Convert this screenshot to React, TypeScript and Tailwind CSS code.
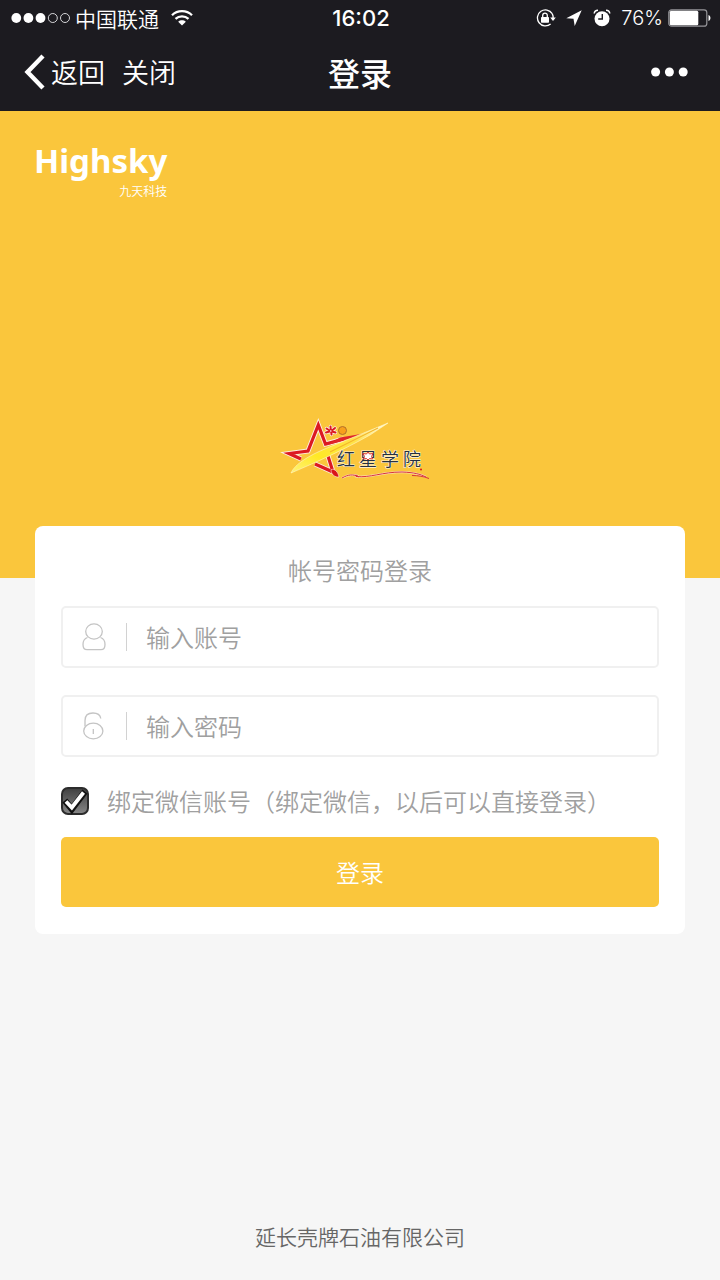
import { useState } from "react";

function StatusBar() {
  return (
    <div className="grid h-9 grid-cols-[1fr_auto_1fr] items-center pl-[11px] pr-[9px]">
      <div className="flex items-center">
        <svg className="h-3 w-[60px]" viewBox="0 0 60 12" aria-hidden="true">
          <g fill="#fff">
            <circle cx="5.3" cy="6" r="4.9" />
            <circle cx="17.4" cy="6" r="4.9" />
            <circle cx="29.5" cy="6" r="4.9" />
          </g>
          <g fill="none" stroke="#d5d5d8" strokeWidth="1">
            <circle cx="41.8" cy="6" r="4.5" />
            <circle cx="54" cy="6" r="4.5" />
          </g>
        </svg>
        <span className="ml-1 text-[21px] leading-8">中国联通</span>
        <svg className="ml-3 h-4 w-[22px]" viewBox="0 0 22 16" aria-hidden="true">
          <g fill="none" stroke="#fff" strokeWidth="2.3">
            <path d="M1 5.2C6.5-.2 15.5-.2 21 5.2" />
            <path d="M4.5 8.9c3.6-3.4 9.4-3.4 13 0" />
          </g>
          <path d="M7.2 11.7c2.2-1.9 5.4-1.9 7.6 0L11 15.6z" fill="#fff" />
        </svg>
      </div>
      <span className="font-['Inter','Noto_Sans_CJK_SC',sans-serif] text-[22px] font-medium leading-8">16:02</span>
      <div className="flex items-center justify-end">
        <svg className="h-[18px] w-5" viewBox="0 0 20 18" aria-hidden="true">
          <path d="M16.2 4.6A8 8 0 1 0 14.6 15" fill="none" stroke="#fff" strokeWidth="1.3" />
          <path d="M16.2 4.6c.8 1.400 1.100 3 .9 5" fill="none" stroke="#fff" strokeWidth="1.3" />
          <path d="M14.2 8.4h5.6L17 12z" fill="#fff" />
          <rect x="5" y="8" width="8" height="5.8" rx=".7" fill="#fff" />
          <path d="M6.7 8.2V6.4a2.3 2.3 0 0 1 4.6 0v1.8" fill="none" stroke="#fff" strokeWidth="1.3" />
        </svg>
        <svg className="ml-2.5 h-4 w-4" viewBox="0 0 16 16" aria-hidden="true">
          <path d="M15.7.2.3 8.200l7.200.5 1.200 7.200z" fill="#fff" />
        </svg>
        <svg className="ml-[11px] h-[18px] w-[18px]" viewBox="0 0 18 18" aria-hidden="true">
          <circle cx="9" cy="9.700" r="7.500" fill="#fff" />
          <path d="M1.200 4.500C1.400 2.500 2.900 1.200 5 1.200M16.800 4.500c-.2-2-1.700-3.300-3.800-3.300" fill="none" stroke="#fff" strokeWidth="1.500" />
          <path d="M9.300 5v5H5.200" fill="none" stroke="#1c1b20" strokeWidth="1.400" />
        </svg>
        <span className="ml-2.5 font-['Inter','Noto_Sans_CJK_SC',sans-serif] text-xl leading-8 font-[350]">76%</span>
        <svg className="ml-[5px] h-[18px] w-[43px]" viewBox="0 0 43 18" aria-hidden="true">
          <rect x=".8" y=".8" width="38" height="16.400" rx="2.800" fill="none" stroke="#96969a" strokeWidth="1.200" />
          <rect x="1.800" y="1.800" width="28.500" height="14.400" rx="1.500" fill="#fff" />
          <path d="M40.500 6c2.600.8 2.600 5.200 0 6z" fill="#fff" />
        </svg>
      </div>
    </div>
  );
}

function NavBar() {
  return (
    <nav className="grid h-[75px] grid-cols-[1fr_auto_1fr] items-center px-6 pb-1">
      <div className="flex items-center text-[27px] leading-9">
        <button type="button" className="flex items-center gap-1.5">
          <svg className="h-9 w-[21px]" viewBox="0 0 21 36" aria-hidden="true">
            <path d="M19 2 3.500 18 19 34" fill="none" stroke="#fff" strokeWidth="4.400" />
          </svg>
          返回
        </button>
        <button type="button" className="ml-[17px]">关闭</button>
      </div>
      <h1 className="text-[32px] font-medium leading-10">登录</h1>
      <button type="button" aria-label="更多" className="mr-2 justify-self-end">
        <svg className="h-2.5 w-[37px]" viewBox="0 0 37 10" fill="#fff" aria-hidden="true">
          <circle cx="4.600" cy="5" r="4.500" />
          <circle cx="18.400" cy="5" r="4.500" />
          <circle cx="32.200" cy="5" r="4.500" />
        </svg>
      </button>
    </nav>
  );
}

function AcademyLogo() {
  return (
    <svg className="h-20 w-40" viewBox="0 0 160 80" role="img" aria-label="红星学院">
      <defs>
        <linearGradient id="beam" x1="0" y1="1" x2="1" y2="0">
          <stop offset="0" stopColor="#fff27a" />
          <stop offset=".3" stopColor="#ffe926" />
          <stop offset=".65" stopColor="#ffe14a" />
          <stop offset="1" stopColor="#fffbe8" />
        </linearGradient>
      </defs>
      {/* star outline: white edge below, red on top */}
      <g fill="none" strokeLinejoin="miter">
        <path d="M21 49 9 43.500 28 41 38.300 15 45.500 34 64 29" stroke="#fdeee0" strokeWidth="5" />
        <path d="M35 54 53 62 48 46" stroke="#fdeee0" strokeWidth="5" />
        <path d="M21 49 9 43.500 28 41 38.300 15 45.500 34 64 29" stroke="#dc1a22" strokeWidth="3.200" />
        <path d="M35 54 53 62 48 46" stroke="#dc1a22" strokeWidth="3.200" />
      </g>
      <path d="M46 35.500 90 22.500 60 27.500z" fill="#e0262a" />
      <path d="M51 59.500c4-1 7 2.500 8 7.500-4 .5-8-2.500-8-7.500Z" fill="#d9151a" stroke="#fdeee0" strokeWidth=".6" />
      {/* beam across the star */}
      <path d="M11 63C15 54 29 45 52 36L108 13 90 25C63 40 39 51 11 63Z" fill="url(#beam)" stroke="#fff8c8" strokeWidth=".6" />
      <path d="M50 42 98 18" fill="none" stroke="#f4b62a" strokeWidth="1.200" />
      {/* flower and sun */}
      <path
        d="M46.500 18.500 49.500 20.500M50.500 16.500l.3 3.500M55 18l-3 2.500M46 22.500l3.500-1M51.500 24.500l-.3-3M55.500 22.500l-3.500-1"
        stroke="#fdeee0"
        strokeWidth="3.400"
        strokeLinecap="round"
      />
      <path
        d="M46.500 18.500 49.500 20.500M50.500 16.500l.3 3.500M55 18l-3 2.500M46 22.500l3.500-1M51.500 24.500l-.3-3M55.500 22.500l-3.500-1"
        stroke="#dc1a22"
        strokeWidth="2"
        strokeLinecap="round"
      />
      <circle cx="50.800" cy="21" r=".8" fill="#fff" />
      <circle cx="62.500" cy="20.500" r="4" fill="#f8a01c" stroke="#b0702c" strokeWidth="1" />
      {/* red sweep under the name */}
      <path
        d="M62 68C68 64.500 73 64 78 66.500c3 1.500-5-4-2 0 14 1.500 26-4.500 46-4.500 12 .5 18 2 24 5"
        fill="none"
        stroke="#fbe3c0"
        strokeWidth="2"
      />
      <path
        d="M62 68C68 64.500 73 64 78 66.500c3 1.500-5-4-2 0 14 1.500 26-4.500 46-4.500 12 .5 18 2 24 5M132 65.500c6 0 12 1 17 3"
        fill="none"
        stroke="#d8343a"
        strokeWidth="1"
      />
      <text
        x="57 79 101 123"
        y="56"
        fill="#24303f"
        stroke="#fdf3dc"
        strokeWidth="1.200"
        paintOrder="stroke"
        className="font-['Noto_Sans_CJK_SC',sans-serif] text-[18px]"
      >
        红星学院
      </text>
      <path d="M83 43.500l3.500.5 1.500-2 1.500 2 3.500-.5-1.500 3 1 2.500-3-.5-1.500 1.500-1.500-1.500-3 .5 1-2.500z" fill="#fff" stroke="#d8343a" strokeWidth="1" />
      <circle cx="141" cy="59.500" r="1" fill="#d9151a" />
    </svg>
  );
}

function UserIcon() {
  return (
    <svg className="h-7 w-6" viewBox="0 0 24 28" fill="none" stroke="#c4c4c4" strokeWidth="1.300" aria-hidden="true">
      <ellipse cx="12" cy="8.500" rx="8.300" ry="7.600" />
      <path d="M5.500 14.500C2.500 15.500 1 18 1 21.500 1 25 2.300 26.700 5 26.700h14c2.700 0 4-1.700 4-5.200 0-3.500-1.500-6-4.500-7" />
    </svg>
  );
}

function LockIcon() {
  return (
    <svg className="h-7 w-6" viewBox="0 0 24 28" fill="none" stroke="#c4c4c4" strokeWidth="1.300" aria-hidden="true">
      <ellipse cx="11.300" cy="19" rx="9.600" ry="7.900" />
      <path d="M3 14.500V8.500C3 3.500 6 1 11 1c4.500 0 7.300 2 7.800 5.500M11.300 17v5" />
    </svg>
  );
}

const fields = [
  { name: "account", type: "text", placeholder: "输入账号", Icon: UserIcon },
  { name: "password", type: "password", placeholder: "输入密码", Icon: LockIcon },
];

export default function App() {
  const [bind, setBind] = useState(true);

  return (
    <div className="flex min-h-screen flex-col bg-[#f6f6f6] font-['Noto_Sans_CJK_SC',sans-serif] font-[350]">
      <header className="bg-[#1c1b20] text-white">
        <StatusBar />
        <NavBar />
      </header>

      <section className="flex flex-col justify-between bg-[#fac63c] pb-[88px] pt-8">
        <div className="ml-[34px] w-fit text-right text-white">
          <div className="font-['Noto_Sans',sans-serif] text-[33px] font-bold leading-9">Highsky</div>
          <div className="text-xs leading-6">九天科技</div>
        </div>
        <div className="mt-[207px] flex justify-center">
          <AcademyLogo />
        </div>
      </section>

      <main className="relative mx-[35px] -mt-[52px] rounded-lg bg-white px-[26px] pb-[27px] pt-7">
        <h2 className="text-center text-2xl leading-8 font-[350] text-[#a0a0a0]">帐号密码登录</h2>
        <form onSubmit={(e) => e.preventDefault()}>
          <div className="mt-5 flex flex-col gap-[27px]">
            {fields.map(({ name, type, placeholder, Icon }) => (
              <label
                key={name}
                className="flex h-[62px] items-center rounded-[5px] border-2 border-[#f0f0f0] pl-[19px]"
              >
                <Icon />
                <span className="ml-5 h-7 w-px bg-[#d2d2d2]" />
                <input
                  name={name}
                  type={type}
                  placeholder={placeholder}
                  aria-label={placeholder}
                  className="ml-[19px] h-full min-w-0 flex-1 bg-transparent pb-0.5 text-2xl font-[350] text-gray-700 outline-none placeholder:text-[#a0a0a0]"
                />
              </label>
            ))}
          </div>

          <label className="mt-7 flex h-8 items-center gap-[18px] text-2xl text-[#a0a0a0]">
            <span className="grid size-7 shrink-0">
              <input
                type="checkbox"
                checked={bind}
                onChange={(e) => setBind(e.target.checked)}
                className="col-start-1 row-start-1 size-7 appearance-none rounded-[7px] border-2 border-[#2c2c2c] bg-linear-to-b from-[#424242] to-[#858585]"
              />
              {bind && (
                <svg className="pointer-events-none col-start-1 row-start-1 size-7" viewBox="0 0 28 28" aria-hidden="true">
                  <path d="m3.800 13.500 7 8.500L24 4.500" fill="none" stroke="#111" strokeWidth="6.400" />
                  <path d="m5 14.500 5.800 6L22.500 5.500" fill="none" stroke="#fff" strokeWidth="3.800" />
                </svg>
              )}
            </span>
            绑定微信账号（绑定微信，以后可以直接登录）
          </label>

          <button
            type="submit"
            className="mt-5 h-[70px] w-full rounded-[5px] bg-[#fac63c] text-2xl font-[350] text-white"
          >
            登录
          </button>
        </form>
      </main>

      <footer className="mt-auto pb-7 pt-10 text-center text-[21px] leading-8 text-[#666]">
        延长壳牌石油有限公司
      </footer>
    </div>
  );
}
